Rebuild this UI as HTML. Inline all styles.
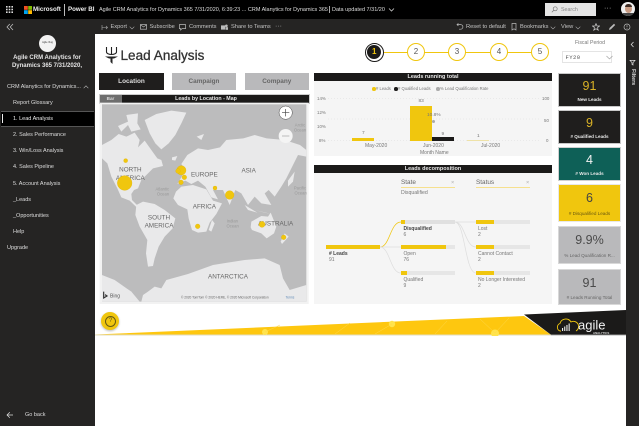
<!DOCTYPE html>
<html><head><meta charset="utf-8"><title>Lead Analysis</title>
<style>
html,body{margin:0;padding:0;background:#fff}
body{width:639px;height:426px;position:relative;overflow:hidden;font-family:"Liberation Sans",sans-serif}
.a{position:absolute;white-space:nowrap}
.c{text-align:center}
.nav{position:absolute;left:13px;font-size:5.5px;color:#ddd;white-space:nowrap;line-height:7px}
.tb{position:absolute;top:23.5px;font-size:5.7px;color:#c4c4c4;white-space:nowrap;line-height:7px}
.step{position:absolute;top:43px;width:16px;height:16px;border:1.2px solid #f0c60e;border-radius:50%;background:#fff;text-align:center;font-size:8px;line-height:16px;color:#555;box-sizing:content-box}
.card{position:absolute;left:558px;width:63px;text-align:center;border:1px solid #c8c8c8;box-sizing:border-box}
.card b{position:absolute;left:0;right:0;font-weight:normal;font-size:12px}
.card i{position:absolute;left:0;right:0;font-style:normal;font-size:4.6px;font-weight:bold;white-space:nowrap;overflow:hidden}
.hdr{position:absolute;background:#1b1a19;color:#e8e8e8;font-size:5.5px;text-align:center;font-weight:bold}
.t{position:absolute;font-size:4.8px;color:#777;white-space:nowrap;line-height:6px}
.bar{position:absolute;height:4px;background:#e6e6e6}
.bar span{display:block;height:4px;background:#f0c60e}
</style></head><body>

<div class="a" style="left:0;top:0;width:639px;height:19px;background:#000"></div>
<div class="a" style="left:0;top:19px;width:639px;height:15px;background:#252423"></div>
<div class="a" style="left:0;top:19px;width:94.5px;height:407px;background:#252423"></div>
<div class="a" style="left:626px;top:34px;width:13px;height:392px;background:#252423"></div>

<!-- top bar -->
<svg class="a" style="left:6px;top:6px" width="7" height="7" viewBox="0 0 7 7"><g fill="#ddd"><rect width="1.6" height="1.6"/><rect x="2.7" width="1.6" height="1.6"/><rect x="5.4" width="1.6" height="1.6"/><rect y="2.7" width="1.6" height="1.6"/><rect x="2.7" y="2.7" width="1.6" height="1.6"/><rect x="5.4" y="2.7" width="1.6" height="1.6"/><rect y="5.4" width="1.6" height="1.6"/><rect x="2.7" y="5.4" width="1.6" height="1.6"/><rect x="5.4" y="5.4" width="1.6" height="1.6"/></g></svg>
<svg class="a" style="left:24px;top:6px" width="8" height="8" viewBox="0 0 8 8"><rect width="3.8" height="3.8" fill="#f25022"/><rect x="4.2" width="3.8" height="3.8" fill="#7fba00"/><rect y="4.2" width="3.8" height="3.8" fill="#00a4ef"/><rect x="4.2" y="4.2" width="3.8" height="3.8" fill="#ffb900"/></svg>
<div class="a" style="left:33px;top:6px;font-size:6.2px;line-height:8px;color:#eee;font-weight:bold">Microsoft</div>
<div class="a" style="left:64px;top:4px;width:1px;height:12px;background:#bbb"></div>
<div class="a" style="left:68px;top:6px;font-size:6.2px;line-height:8px;color:#eee;font-weight:bold">Power BI</div>
<div class="a" style="left:99px;top:6px;font-size:5.5px;line-height:8px;color:#ddd">Agile CRM Analytics for Dynamics 365 7/31/2020, 6:39:23 ... CRM Alanytics for Dynamics 365</div>
<div class="a" style="left:329px;top:6px;width:1px;height:7px;background:#aaa"></div>
<div class="a" style="left:332px;top:6px;font-size:5.5px;line-height:8px;color:#ddd">Data updated 7/31/20</div>
<svg class="a" style="left:388px;top:8px" width="7" height="4" viewBox="0 0 7 4"><path d="M1 .5L3.5 3L6 .5" fill="none" stroke="#ccc" stroke-width=".8"/></svg>
<div class="a" style="left:545px;top:3px;width:51px;height:13px;background:#e4e4e4"></div>
<svg class="a" style="left:551px;top:6px" width="7" height="7" viewBox="0 0 7 7"><circle cx="4.2" cy="2.8" r="2" fill="none" stroke="#777" stroke-width=".7"/><path d="M2.8 4.2L.8 6.2" stroke="#777" stroke-width=".7"/></svg>
<div class="a" style="left:561px;top:6px;font-size:5.3px;line-height:8px;color:#888">Search</div>
<div class="a" style="left:604px;top:5px;font-size:7px;line-height:7px;color:#ccc;letter-spacing:.2px">···</div>
<div class="a" style="left:621px;top:2px;width:14px;height:14px;border-radius:50%;background:#eee;overflow:hidden"><div style="position:absolute;left:3.5px;top:3px;width:7px;height:8px;border-radius:50%;background:#c99c84"></div><div style="position:absolute;left:3.5px;top:2px;width:7px;height:3px;border-radius:3px 3px 0 0;background:#3d2a22"></div><div style="position:absolute;left:1.5px;top:11px;width:11px;height:4px;background:#444"></div></div>

<!-- action bar -->
<svg class="a" style="left:6px;top:23px" width="8" height="8" viewBox="0 0 8 8"><path d="M3.8 1L1 4L3.8 7M7 1L4.2 4L7 7" fill="none" stroke="#bbb" stroke-width=".8"/></svg>
<svg class="a" style="left:101px;top:25px" width="7" height="5" viewBox="0 0 7 5"><path d="M1 0V5M1 2.5H6.5M5 1L6.5 2.5L5 4" fill="none" stroke="#aaa" stroke-width=".6"/></svg>
<div class="tb" style="left:110.5px">Export</div>
<svg class="a" style="left:129px;top:25.5px" width="6" height="4" viewBox="0 0 6 4"><path d="M.7.7L3 3L5.3.7" fill="none" stroke="#aaa" stroke-width=".6"/></svg>
<svg class="a" style="left:140px;top:24px" width="7" height="6" viewBox="0 0 7 6"><rect x=".4" y=".6" width="6.2" height="4.6" fill="none" stroke="#bbb" stroke-width=".7"/><path d="M.4.8L3.5 3L6.6.8" fill="none" stroke="#bbb" stroke-width=".6"/></svg>
<div class="tb" style="left:149.5px">Subscribe</div>
<svg class="a" style="left:179px;top:24px" width="7" height="7" viewBox="0 0 7 7"><path d="M.4.6H6.6V4.6H3L1.6 6V4.6H.4Z" fill="none" stroke="#bbb" stroke-width=".7"/></svg>
<div class="tb" style="left:189px">Comments</div>
<svg class="a" style="left:221px;top:24px" width="7" height="7" viewBox="0 0 7 7"><rect x="0" y="1.4" width="4.4" height="4.2" fill="#bbb"/><circle cx="5.4" cy="1.8" r="1.3" fill="#bbb"/><rect x="4.8" y="3.2" width="2.2" height="2.6" fill="#bbb"/></svg>
<div class="tb" style="left:231px">Share to Teams</div>
<div class="a" style="left:275px;top:23px;font-size:7px;line-height:7px;color:#aaa">···</div>
<svg class="a" style="left:456px;top:23px" width="8" height="8" viewBox="0 0 8 8"><path d="M1 1.6H4.6A2.3 2.3 0 0 1 4.6 6.2H3M2.4 .4L1 1.6L2.4 2.8" fill="none" stroke="#bbb" stroke-width=".7"/></svg>
<div class="tb" style="left:466px">Reset to default</div>
<svg class="a" style="left:511px;top:23px" width="6" height="8" viewBox="0 0 6 8"><path d="M1 .5H5V7L3 5.8L1 7Z" fill="none" stroke="#bbb" stroke-width=".7"/></svg>
<div class="tb" style="left:520px">Bookmarks</div>
<svg class="a" style="left:550px;top:25.5px" width="6" height="4" viewBox="0 0 6 4"><path d="M.7.7L3 3L5.3.7" fill="none" stroke="#aaa" stroke-width=".6"/></svg>
<div class="tb" style="left:561px">View</div>
<svg class="a" style="left:575px;top:25.5px" width="6" height="4" viewBox="0 0 6 4"><path d="M.7.7L3 3L5.3.7" fill="none" stroke="#aaa" stroke-width=".6"/></svg>
<svg class="a" style="left:592px;top:23px" width="8" height="8" viewBox="0 0 8 8"><path d="M4 .6L5 3H7.6L5.5 4.6L6.2 7.2L4 5.7L1.8 7.2L2.5 4.6L.4 3H3Z" fill="none" stroke="#ccc" stroke-width=".7"/></svg>
<svg class="a" style="left:608px;top:23px" width="8" height="8" viewBox="0 0 8 8"><path d="M1 7L1.5 5L6 .8L7.2 2L2.8 6.4Z" fill="#bbb"/></svg>
<svg class="a" style="left:623px;top:23px" width="8" height="8" viewBox="0 0 8 8"><circle cx="4" cy="4" r="3" fill="none" stroke="#bbb" stroke-width=".7"/><path d="M4 2.2V4.2M4 5V5.8" stroke="#bbb" stroke-width=".7"/></svg>

<!-- sidebar -->
<div class="a" style="left:39px;top:35px;width:17px;height:17px;border-radius:50%;background:#f2f2f2"></div>
<div class="a c" style="left:42px;top:41px;width:11px;font-size:2.4px;line-height:3px;color:#333">Agile Vlog</div>
<div class="a c" style="left:0;top:53.5px;width:94px;font-size:6px;line-height:8.7px;color:#e4e4e4;font-weight:bold">Agile CRM Analytics for<br>Dynamics 365 7/31/2020,</div>
<div class="nav" style="left:7px;top:83.5px">CRM Alanytics for Dynamics...</div>
<svg class="a" style="left:83px;top:85px" width="6" height="4" viewBox="0 0 6 4"><path d="M.7 3.2L3 .8L5.3 3.2" fill="none" stroke="#bbb" stroke-width=".6"/></svg>
<div class="nav" style="top:99.5px">Report Glossary</div>
<div class="a" style="left:1px;top:110.5px;width:93px;height:16px;background:#000;border-top:.6px solid #555;border-bottom:.6px solid #555;box-sizing:border-box"></div>
<div class="a" style="left:2px;top:114px;width:1.4px;height:9px;background:#eee"></div>
<div class="nav" style="top:115.5px;color:#eee">1. Lead Analysis</div>
<div class="nav" style="top:132px">2. Sales Performance</div>
<div class="nav" style="top:148px">3. Win/Loss Analysis</div>
<div class="nav" style="top:164px">4. Sales Pipeline</div>
<div class="nav" style="top:180.5px">5. Account Analysis</div>
<div class="nav" style="top:196.5px">_Leads</div>
<div class="nav" style="top:212.5px">_Opportunities</div>
<div class="nav" style="top:229px">Help</div>
<div class="nav" style="left:7px;top:245px">Upgrade</div>
<svg class="a" style="left:6px;top:411px" width="8" height="8" viewBox="0 0 8 8"><path d="M7 4H1M3.8 1.2L1 4L3.8 6.8" fill="none" stroke="#ddd" stroke-width=".7"/></svg>
<div class="nav" style="left:25px;top:411.5px">Go back</div>

<!-- title -->
<svg class="a" style="left:105px;top:47px" width="13" height="18" viewBox="0 0 13 18"><g fill="none" stroke="#222" stroke-width="1.1"><path d="M1.5 0V5A5 2.5 0 0 0 11.5 5V0M6.5 0V8"/></g><path d="M0 9.5H13L9 11.5H7.5V17L5.5 15V11.5H4Z" fill="#222"/></svg>
<div class="a" style="left:120.5px;top:46px;font-size:13.5px;line-height:19px;color:#333;-webkit-text-stroke:.3px #333;letter-spacing:.05px">Lead Analysis</div>

<!-- tabs -->
<div class="a c" style="left:99px;top:73px;width:65px;height:17px;background:#1f1e1d;color:#ddd;font-size:6.4px;line-height:17px;font-weight:bold">Location</div>
<div class="a c" style="left:172px;top:73px;width:64px;height:17px;background:#b9b9bb;color:#666;font-size:6.4px;line-height:17px;font-weight:bold">Campaign</div>
<div class="a c" style="left:244.5px;top:73px;width:64.5px;height:17px;background:#b9b9bb;color:#666;font-size:6.4px;line-height:17px;font-weight:bold">Company</div>

<!-- steps -->
<div class="a" style="left:375px;top:52px;width:165px;height:1.2px;background:#f0c60e"></div>
<div class="a" style="left:364.5px;top:42.5px;width:17px;height:17px;border:1.2px solid #1b1a19;border-radius:50%;background:#fff"></div>
<div class="a c" style="left:367px;top:45px;width:14.4px;height:14.4px;border-radius:50%;background:#1b1a19;color:#f0c60e;font-size:8px;line-height:14.4px;font-weight:bold">1</div>
<div class="step" style="left:407px">2</div>
<div class="step" style="left:448px">3</div>
<div class="step" style="left:490px">4</div>
<div class="step" style="left:531px">5</div>
<div class="a" style="left:575px;top:40px;font-size:5.2px;line-height:7px;color:#777">Fiscal Period</div>
<div class="a" style="left:562px;top:51px;width:50px;height:12px;border:.6px solid #e4e4e4;box-sizing:border-box"></div>
<div class="a" style="left:565.5px;top:53.5px;font-size:5.6px;line-height:7px;color:#555;letter-spacing:.4px;font-family:'Liberation Mono',monospace">FY20</div>
<svg class="a" style="left:606px;top:55px" width="7" height="5" viewBox="0 0 7 5"><path d="M.5 1L3.5 4L6.5 1" fill="none" stroke="#999" stroke-width=".6"/></svg>

<!-- right pane -->
<svg class="a" style="left:630px;top:41px" width="5" height="7" viewBox="0 0 5 7"><path d="M3.5 1L1.2 3.5L3.5 6" fill="none" stroke="#ddd" stroke-width=".8"/></svg>
<svg class="a" style="left:629px;top:58.5px" width="7" height="7" viewBox="0 0 7 7"><path d="M1 1.4H6L4 3.6V6L3 5.4V3.6Z" fill="none" stroke="#ddd" stroke-width=".7"/></svg>
<div class="a" style="left:629px;top:69px;font-size:5.4px;line-height:7px;color:#ddd;font-weight:bold;writing-mode:vertical-rl">Filters</div>

<!-- map header -->
<div class="a" style="left:99.5px;top:94.5px;width:209px;height:8px;background:#1b1a19;outline:.5px solid #ccc"></div>
<div class="a c" style="left:99.5px;top:94.5px;width:22px;height:8px;background:#6e6e6e;color:#ddd;font-size:4.6px;line-height:8px;font-weight:bold">Bar</div>
<div class="a c" style="left:140px;top:94.5px;width:132px;height:8px;color:#e8e8e8;font-size:5.3px;line-height:8px;font-weight:bold">Leads by Location - Map</div>

<!-- map -->
<svg class="a" style="left:98px;top:90px" width="215" height="215" viewBox="0 0 645 645">
<defs><clipPath id="m"><rect x="12" y="43" width="613" height="592"/></clipPath></defs>
<rect x="5" y="38" width="627" height="604" fill="#f2f2f2"/>
<rect x="12" y="43" width="613" height="592" fill="#bcbcbd"/>
<g clip-path="url(#m)" fill="#e9e9ea">
<path d="M12 165L40 150L62 132L85 140L110 128L125 150L120 172L140 152L160 180L178 205L190 210L195 228L165 235L150 250L130 270L120 295L108 300L100 312L102 330L130 358L116 352L95 332L70 322L58 295L40 260L28 220L12 205Z"/>
<path d="M85 75L120 70L118 100L128 118L100 125L90 105L70 125L60 108L90 95Z"/>
<path d="M140 90L175 72L220 62L265 68L250 100L232 135L212 160L190 178L172 160L155 130Z"/>
<path d="M115 345L135 335L170 342L200 360L232 385L224 415L200 440L182 470L170 505L165 528L150 530L144 490L148 450L125 410L112 375Z"/>
<path d="M234 305L250 290L285 285L325 298L345 332L372 340L355 372L335 398L325 425L300 428L282 420L272 385L268 358L240 345L226 325Z"/>
<path d="M238 282L250 262L262 240L250 222L268 195L300 175L330 180L366 172L385 150L436 145L470 135L506 145L560 150L606 165L625 180L625 200L600 195L585 225L565 265L550 290L530 320L512 300L500 310L520 345L490 340L470 320L450 345L430 310L412 300L395 345L375 300L345 300L360 328L340 322L322 290L300 272L280 282L262 272Z"/>
<path d="M296 140L318 132L310 150Z"/><path d="M222 202L238 198L232 212L222 210Z"/><path d="M246 232L258 225L262 250L248 254Z"/>
<path d="M458 412L460 395L490 378L510 380L518 368L535 410L528 430L506 445L490 430L462 420Z"/>
<path d="M570 272L590 245L585 275L570 290Z"/><path d="M470 360L520 372L500 368Z"/><path d="M440 345L478 368L450 360Z"/><path d="M342 390L350 400L340 425L332 420Z"/>
<path d="M560 430L572 440L552 462L548 455Z"/>
<path d="M130 635L135 615L150 605L170 590L190 595L205 570L270 552L345 525L375 520L440 510L500 505L545 525L555 565L575 600L625 585L625 635Z"/>
<path d="M12 555L50 570L100 605L125 635H12Z"/>
</g>
<g font-family="Liberation Sans" fill="#666" text-anchor="middle">
<g font-size="19"><text x="97" y="245">NORTH</text><text x="97" y="270">AMERICA</text><text x="319" y="260">EUROPE</text><text x="452" y="247">ASIA</text><text x="319" y="355">AFRICA</text><text x="183" y="388">SOUTH</text><text x="183" y="412">AMERICA</text><text x="533" y="406">AUSTRALIA</text><text x="390" y="565">ANTARCTICA</text></g>
<g font-size="12.5" fill="#999"><text x="193" y="302">Atlantic</text><text x="195" y="317">Ocean</text><text x="403" y="398">Indian</text><text x="404" y="413">Ocean</text><text x="606" y="298">Pacific</text><text x="608" y="313">Ocean</text><text x="606" y="110">Arctic</text><text x="606" y="125">Ocean</text></g>
</g>
<g fill="#f0c60e" stroke="#dfb20a" stroke-width="1"><circle cx="80" cy="279" r="22"/><circle cx="83" cy="212" r="6"/><circle cx="250" cy="241" r="14"/><circle cx="240" cy="243" r="7"/><circle cx="259" cy="262" r="7"/><circle cx="249" cy="277" r="7"/><circle cx="351" cy="294" r="6"/><circle cx="395" cy="315" r="13"/><circle cx="299" cy="409" r="7"/><circle cx="492" cy="403" r="9"/><circle cx="557" cy="442" r="7"/></g>
<circle cx="563" cy="68" r="20" fill="#fff" stroke="#444" stroke-width="1.5"/><path d="M552 68H574M563 57V79" stroke="#444" stroke-width="2"/>
<circle cx="563" cy="138" r="21" fill="#f4f4f4"/><path d="M552 138H574" stroke="#bbb" stroke-width="3"/>
<path d="M17 605V624L27 618L21 614" fill="none" stroke="#333" stroke-width="3.5"/>
<text x="36" y="622" font-family="Liberation Sans" font-size="15" fill="#555">Bing</text>
<text x="249" y="626" font-family="Liberation Sans" font-size="9.6" fill="#666">© 2020 TomTom © 2020 HERE, © 2020 Microsoft Corporation</text><text x="563" y="626" font-family="Liberation Sans" font-size="9.6" fill="#5a86b5">Terms</text>
</svg>

<!-- running total -->
<div class="a" style="left:314px;top:73px;width:238px;height:83px;background:#f5f5f5"></div>
<div class="hdr" style="left:314px;top:73px;width:238px;height:8px;line-height:8px">Leads running total</div>
<div class="a" style="left:372px;top:87px;width:3.6px;height:3.6px;border-radius:50%;background:#f0c60e"></div>
<div class="t" style="left:376px;top:86px;font-size:4.2px"># Leads</div>
<div class="a" style="left:394px;top:87px;width:3.6px;height:3.6px;border-radius:50%;background:#1b1a19"></div>
<div class="t" style="left:398px;top:86px;font-size:4.2px"># Qualified Leads</div>
<div class="a" style="left:436px;top:87px;width:3.6px;height:3.6px;border-radius:50%;background:#aaa"></div>
<div class="t" style="left:440px;top:86px;font-size:4.2px">% Lead Qualification Rate</div>
<div class="t" style="left:317px;top:95.5px;font-size:4.4px">14%</div>
<div class="t" style="left:317px;top:109.5px;font-size:4.4px">12%</div>
<div class="t" style="left:317px;top:123.5px;font-size:4.4px">10%</div>
<div class="t" style="left:319px;top:138px;font-size:4.4px">8%</div>
<div class="t" style="left:542px;top:95.5px;font-size:4.4px">100</div>
<div class="t" style="left:544px;top:117.5px;font-size:4.4px">50</div>
<div class="t" style="left:546px;top:138px;font-size:4.4px">0</div>
<svg class="a" style="left:328px;top:90px" width="212" height="52"><g stroke="#ddd" stroke-width=".6" stroke-dasharray="1 2"><path d="M0 8.5H212M0 29H212M0 50.5H212"/></g></svg>
<div class="a" style="left:352px;top:138px;width:22px;height:3px;background:#f0c60e"></div>
<div class="a" style="left:410px;top:105.5px;width:22px;height:35.5px;background:#f0c60e"></div>
<div class="a" style="left:432px;top:137px;width:22px;height:4px;background:#1b1a19"></div>
<div class="a" style="left:467px;top:140px;width:22px;height:1px;background:#eee2a8"></div>
<div class="t" style="left:362px;top:130.5px">7</div>
<div class="t" style="left:418.5px;top:98.5px">83</div>
<div class="t" style="left:427px;top:112.5px">10.8%</div>
<div class="a" style="left:432px;top:120px;width:3px;height:3px;border-radius:50%;background:#aaa"></div>
<div class="t" style="left:441.5px;top:131.5px">9</div>
<div class="t" style="left:477px;top:133.5px">1</div>
<div class="t" style="left:365px;top:143px;font-size:5px">May-2020</div>
<div class="t" style="left:423px;top:143px;font-size:5px">Jun-2020</div>
<div class="t" style="left:481px;top:143px;font-size:5px">Jul-2020</div>
<div class="t" style="left:420px;top:149.5px;font-size:5px">Month Name</div>

<!-- decomposition -->
<div class="a" style="left:314px;top:165px;width:238px;height:139px;background:#f5f5f5"></div>
<div class="hdr" style="left:314px;top:165px;width:238px;height:8px;line-height:8px">Leads decomposition</div>
<div class="t" style="left:401px;top:179px;font-size:6.4px;line-height:8px;color:#666">State</div>
<div class="t" style="left:476px;top:179px;font-size:6.4px;line-height:8px;color:#666">Status</div>
<div class="t" style="left:451px;top:180px;color:#aaa;font-size:5.5px">×</div>
<div class="t" style="left:526px;top:180px;color:#aaa;font-size:5.5px">×</div>
<div class="a" style="left:401px;top:187px;width:54px;height:1.3px;background:#f6e08e"></div>
<div class="a" style="left:476px;top:187px;width:54px;height:1.3px;background:#f6e08e"></div>
<div class="t" style="left:401px;top:190px;font-size:5.2px;line-height:7px">Disqualified</div>
<svg class="a" style="left:312px;top:160px" width="245" height="145" fill="none"><path d="M68 87C78 87 78 62 89 62" stroke="#f0c60e" stroke-width=".7"/><path d="M68 87H89M68 87C78 87 78 113 89 113" stroke="#ddd" stroke-width=".7"/><path d="M143 62H164M143 62C153 62 153 87 164 87M143 62C153 62 153 113 164 113" stroke="#ddd" stroke-width=".7"/></svg>
<div class="bar" style="left:326px;top:245px;width:54px"><span style="width:54px"></span></div>
<div class="t" style="left:329px;top:251px;font-size:5px;color:#444;font-weight:bold"># Leads</div>
<div class="t" style="left:329px;top:257px;font-size:5px">91</div>
<div class="bar" style="left:401px;top:220px;width:54px;background:#e0e0e0"><span style="width:4px"></span></div>
<div class="t" style="left:403.5px;top:225.5px;font-size:5px;color:#444;font-weight:bold">Disqualified</div>
<div class="t" style="left:403.5px;top:231.5px;font-size:5px">6</div>
<div class="bar" style="left:401px;top:245px;width:54px"><span style="width:45px"></span></div>
<div class="t" style="left:403.5px;top:251px;font-size:5px">Open</div>
<div class="t" style="left:403.5px;top:257px;font-size:5px">76</div>
<div class="bar" style="left:401px;top:270.5px;width:54px"><span style="width:6px"></span></div>
<div class="t" style="left:403.5px;top:276.5px;font-size:5px">Qualified</div>
<div class="t" style="left:403.5px;top:282.5px;font-size:5px">9</div>
<div class="bar" style="left:476px;top:220px;width:54px"><span style="width:18px"></span></div>
<div class="t" style="left:478px;top:225.5px;font-size:5px">Lost</div>
<div class="t" style="left:478px;top:231.5px;font-size:5px">2</div>
<div class="bar" style="left:476px;top:245px;width:54px"><span style="width:18px"></span></div>
<div class="t" style="left:478px;top:251px;font-size:5px">Cannot Contact</div>
<div class="t" style="left:478px;top:257px;font-size:5px">2</div>
<div class="bar" style="left:476px;top:270.5px;width:54px"><span style="width:18px"></span></div>
<div class="t" style="left:478px;top:276.5px;font-size:5px">No Longer Interested</div>
<div class="t" style="left:478px;top:282.5px;font-size:5px">2</div>

<!-- cards -->
<div class="card" style="top:73px;height:34px;background:#1f1e1d"><b style="top:5px;color:#d9b226;font-size:12.5px;line-height:15px">91</b><i style="top:23px;color:#e8e8e8;line-height:6px">New Leads</i></div>
<div class="card" style="top:110px;height:33.5px;background:#1f1e1d"><b style="top:5px;color:#d9b226;font-size:12.5px;line-height:15px">9</b><i style="top:23px;color:#e8e8e8;line-height:6px"># Qualified Leads</i></div>
<div class="card" style="top:147px;height:33.5px;background:#0e6057;border-color:#d0d0d0"><b style="top:5px;color:#f2f2f2;font-size:12.5px;line-height:15px">4</b><i style="top:23px;color:#e8e8e8;line-height:6px"># Won Leads</i></div>
<div class="card" style="top:184px;height:38px;background:#f0c60e;border-color:#e8e8e8"><b style="top:6px;color:#444;font-size:12.5px;line-height:15px">6</b><i style="top:25.5px;color:#6b5a10;line-height:6px;font-weight:normal"># Disqualified Leads</i></div>
<div class="card" style="top:226px;height:37.5px;background:#b9b9bb;border-color:#d8d8d8"><b style="top:6px;color:#4a4a4a;font-size:12.5px;line-height:15px">9.9%</b><i style="top:25.5px;color:#666;line-height:6px;font-weight:normal">% Lead Qualification R...</i></div>
<div class="card" style="top:269px;height:36px;background:#b9b9bb;border-color:#d8d8d8"><b style="top:6px;color:#4a4a4a;font-size:12.5px;line-height:15px">91</b><i style="top:24.5px;color:#666;line-height:6px;font-weight:normal"># Leads Running Total</i></div>

<!-- bottom banner -->
<div class="a" style="left:100.5px;top:311.5px;width:18px;height:18px;border-radius:50%;background:#f0c60e;box-shadow:0 1px 2px #bbb"></div>
<div class="a c" style="left:105px;top:316px;width:9px;height:9px;border:.6px solid #665a14;border-radius:50%;font-size:6px;line-height:9px;color:#665a14;box-sizing:content-box">?</div>
<svg class="a" style="left:95px;top:310px" width="531" height="26" viewBox="0 0 531 26">
<path d="M0 24.5L429 6L456 24.7H0Z" fill="#fec70f"/>
<path d="M429 4.5L531 0V24.7H456Z" fill="#1b1a19"/>
<path d="M0 25H456" stroke="#e2dcc0" stroke-width=".9" fill="none"/><path d="M456 25H531" stroke="#999" stroke-width=".8" fill="none"/>
<circle cx="170" cy="22" r="3" fill="#ffe34d"/><circle cx="297" cy="14" r="3.2" fill="#ffe34d"/><circle cx="400" cy="23.5" r="4" fill="#ffe34d"/>
<path d="M400 23L385 9M400 23L414 8M297 14L280 24M170 22L185 15M240 24L255 13M340 24L352 11" stroke="#ffd84a" stroke-width=".5" fill="none"/>
<path d="M466 21H465A4 4 0 0 1 465 13.5A6 6 0 0 1 476 12A4.5 4.5 0 0 1 481 21" fill="none" stroke="#f0c60e" stroke-width=".9"/>
<g fill="#eee"><rect x="467" y="18" width="1.1" height="3"/><rect x="469.2" y="16.5" width="1.1" height="4.5"/><rect x="471.4" y="15" width="1.1" height="6"/><rect x="473.6" y="13.5" width="1.1" height="7.5"/></g>
<text x="483" y="19.5" font-family="Liberation Sans" font-size="13" fill="#f2f2f2">agile</text>
<text x="498" y="23.8" font-family="Liberation Sans" font-size="2.9" fill="#ddd" font-weight="bold">ANALYTICS</text>
</svg>
</body></html>
